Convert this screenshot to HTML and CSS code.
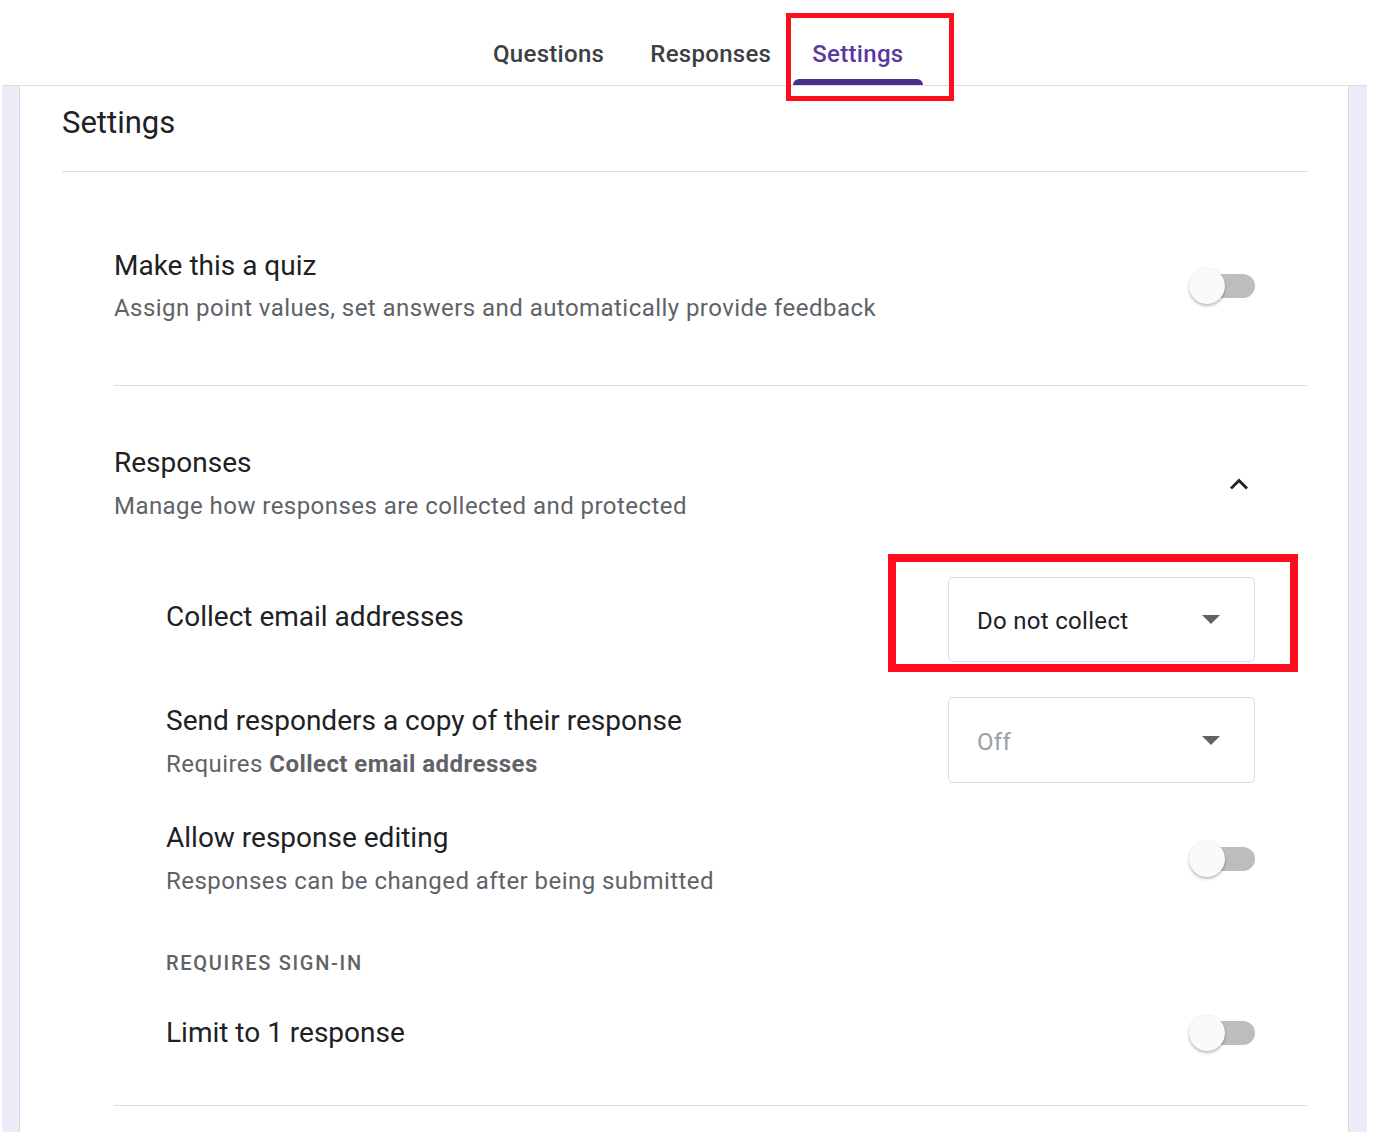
FILE: index.html
```html
<!DOCTYPE html>
<html lang="en">
<head>
<meta charset="utf-8">
<title>Settings</title>
<link rel="stylesheet" href="styles.css">
</head>
<body>
<nav class="tabs">
  <div class="tab">Questions</div>
  <div class="tab tab-narrow">Responses</div>
  <div class="tab tab-active">Settings</div>
</nav>
<div class="frame">
  <main class="card">
    <h1 class="heading">Settings</h1>

    <section class="section">
      <div class="row quiz-row">
        <div class="text">
          <div class="title">Make this a quiz</div>
          <div class="sub sub-tight">Assign point values, set answers and automatically provide feedback</div>
        </div>
        <div class="toggle"><span class="track"></span><span class="knob"></span></div>
      </div>
    </section>

    <section class="section responses">
      <div class="row resp-head">
        <div class="text">
          <div class="title">Responses</div>
          <div class="sub">Manage how responses are collected and protected</div>
        </div>
        <svg class="chevron" width="24" height="24" viewBox="0 0 24 24"><path d="M5 15.5 L12 8.5 L19 15.5" fill="none" stroke="#202124" stroke-width="2.8" stroke-linecap="square"/></svg>
      </div>

      <div class="subrows">
        <div class="row sub-row collect">
          <div class="text"><div class="title">Collect email addresses</div></div>
          <div class="select select-marked"><span>Do not collect</span><span class="caret"></span></div>
        </div>
        <div class="row sub-row copy">
          <div class="text">
            <div class="title">Send responders a copy of their response</div>
            <div class="sub">Requires <b>Collect email addresses</b></div>
          </div>
          <div class="select select-disabled"><span>Off</span><span class="caret"></span></div>
        </div>
        <div class="row sub-row editing">
          <div class="text">
            <div class="title">Allow response editing</div>
            <div class="sub">Responses can be changed after being submitted</div>
          </div>
          <div class="toggle"><span class="track"></span><span class="knob"></span></div>
        </div>
        <div class="label">REQUIRES SIGN-IN</div>
        <div class="row sub-row limit">
          <div class="text"><div class="title">Limit to 1 response</div></div>
          <div class="toggle"><span class="track"></span><span class="knob"></span></div>
        </div>
      </div>
    </section>
  </main>
</div>
</body>
</html>
```
FILE: styles.css
```css
* { box-sizing: border-box; }
html, body { margin: 0; padding: 0; background: #fff; }
body {
  font-family: Roboto, "Liberation Sans", Arial, sans-serif;
  color: #202124;
  width: 1374px;
  height: 1146px;
  overflow: hidden;
}

.tabs {
  display: flex;
  height: 86px;
  margin: 0 7px 0 2px;
  padding-left: 472px;
  border-bottom: 1px solid #dadce0;
}
.tab {
  position: relative;
  display: flex;
  align-items: center;
  height: 85px;
  padding: 22px 19px 0;
  margin-right: 8px;
  font-size: 24px;
  font-weight: 500;
  color: #3c4043;
  letter-spacing: 0.3px;
}
.tab-narrow { margin-right: 3px; }
.tab-active { color: #5a389f; }
.tab-active::after {
  content: "";
  position: absolute;
  left: 0; right: 0; bottom: 0;
  height: 6px;
  background: #4c2d8a;
  border-radius: 6px 6px 0 0;
}
.tab-active::before {
  content: "";
  position: absolute;
  left: -7px; right: -31px; top: 13px; bottom: -16px;
  border: 5px solid #ff0d1f;
  z-index: 2;
}

.frame {
  margin: 0 7px 0 2px;
  height: 1046px;
  padding: 0 18px 0 17px;
  background: #eeeaf8;
  display: flex;
}
.card {
  flex: 1;
  background: #fff;
  border-left: 1px solid #dadce0;
  border-right: 1px solid #dadce0;
  padding: 0 41px 0 42px;
}
.heading {
  margin: 0;
  padding: 20px 0 31px;
  font-size: 31px;
  line-height: 34px;
  font-weight: 400;
  color: #202124;
  border-bottom: 1px solid #dadce0;
}

.section {
  margin-left: 52px;
  border-bottom: 1px solid #dadce0;
}
.row {
  display: flex;
  align-items: center;
  justify-content: space-between;
}
.title {
  font-size: 28px;
  line-height: 34px;
  color: #202124;
}
.sub {
  margin-top: 11px;
  font-size: 24px;
  line-height: 30px;
  color: #5f6368;
  letter-spacing: 0.45px;
}
.sub-tight { margin-top: 10px; }
.sub b { font-weight: 700; }

.quiz-row { padding: 77px 52px 62px 0; }

.resp-head { padding: 60px 56px 0 0; }
.chevron { display: block; }

.subrows { padding: 56px 52px 54px 52px; }
.collect .text { margin-bottom: 5px; }
.copy { margin-top: 35px; }
.copy .text { padding-top: 3px; }
.editing { margin-top: 38px; }
.label {
  margin-top: 55px;
  font-size: 20px;
  line-height: 24px;
  font-weight: 500;
  letter-spacing: 1.7px;
  color: #5f6368;
}
.limit { margin-top: 40px; }

.toggle {
  position: relative;
  width: 66px;
  height: 36px;
  flex: none;
}
.track {
  position: absolute;
  right: 0; top: 6px;
  width: 56px; height: 24px;
  border-radius: 12px;
  background: #bdbdbd;
}
.knob {
  position: absolute;
  left: 0; top: 0;
  width: 36px; height: 36px;
  border-radius: 50%;
  background: #fafafa;
  box-shadow: 0 2px 3px rgba(0,0,0,0.25), 0 0 1px rgba(0,0,0,0.15);
}

.select {
  position: relative;
  flex: none;
  width: 307px;
  height: 85px;
  border: 1.5px solid #dadce0;
  border-radius: 5px;
  padding: 0 34px 0 28px;
  display: flex;
  align-items: center;
  justify-content: space-between;
  font-size: 24px;
  letter-spacing: 0.3px;
  color: #202124;
}
.select > span:first-child { padding-top: 3px; }
.select-disabled { height: 86px; color: #9aa0a6; }
.caret {
  width: 0; height: 0;
  border-left: 9px solid transparent;
  border-right: 9px solid transparent;
  border-top: 9px solid #5f6368;
}
.select-marked::after {
  content: "";
  position: absolute;
  left: -61px; right: -44px; top: -24px; bottom: -11px;
  border: 8px solid #ff0d1f;
}
```
